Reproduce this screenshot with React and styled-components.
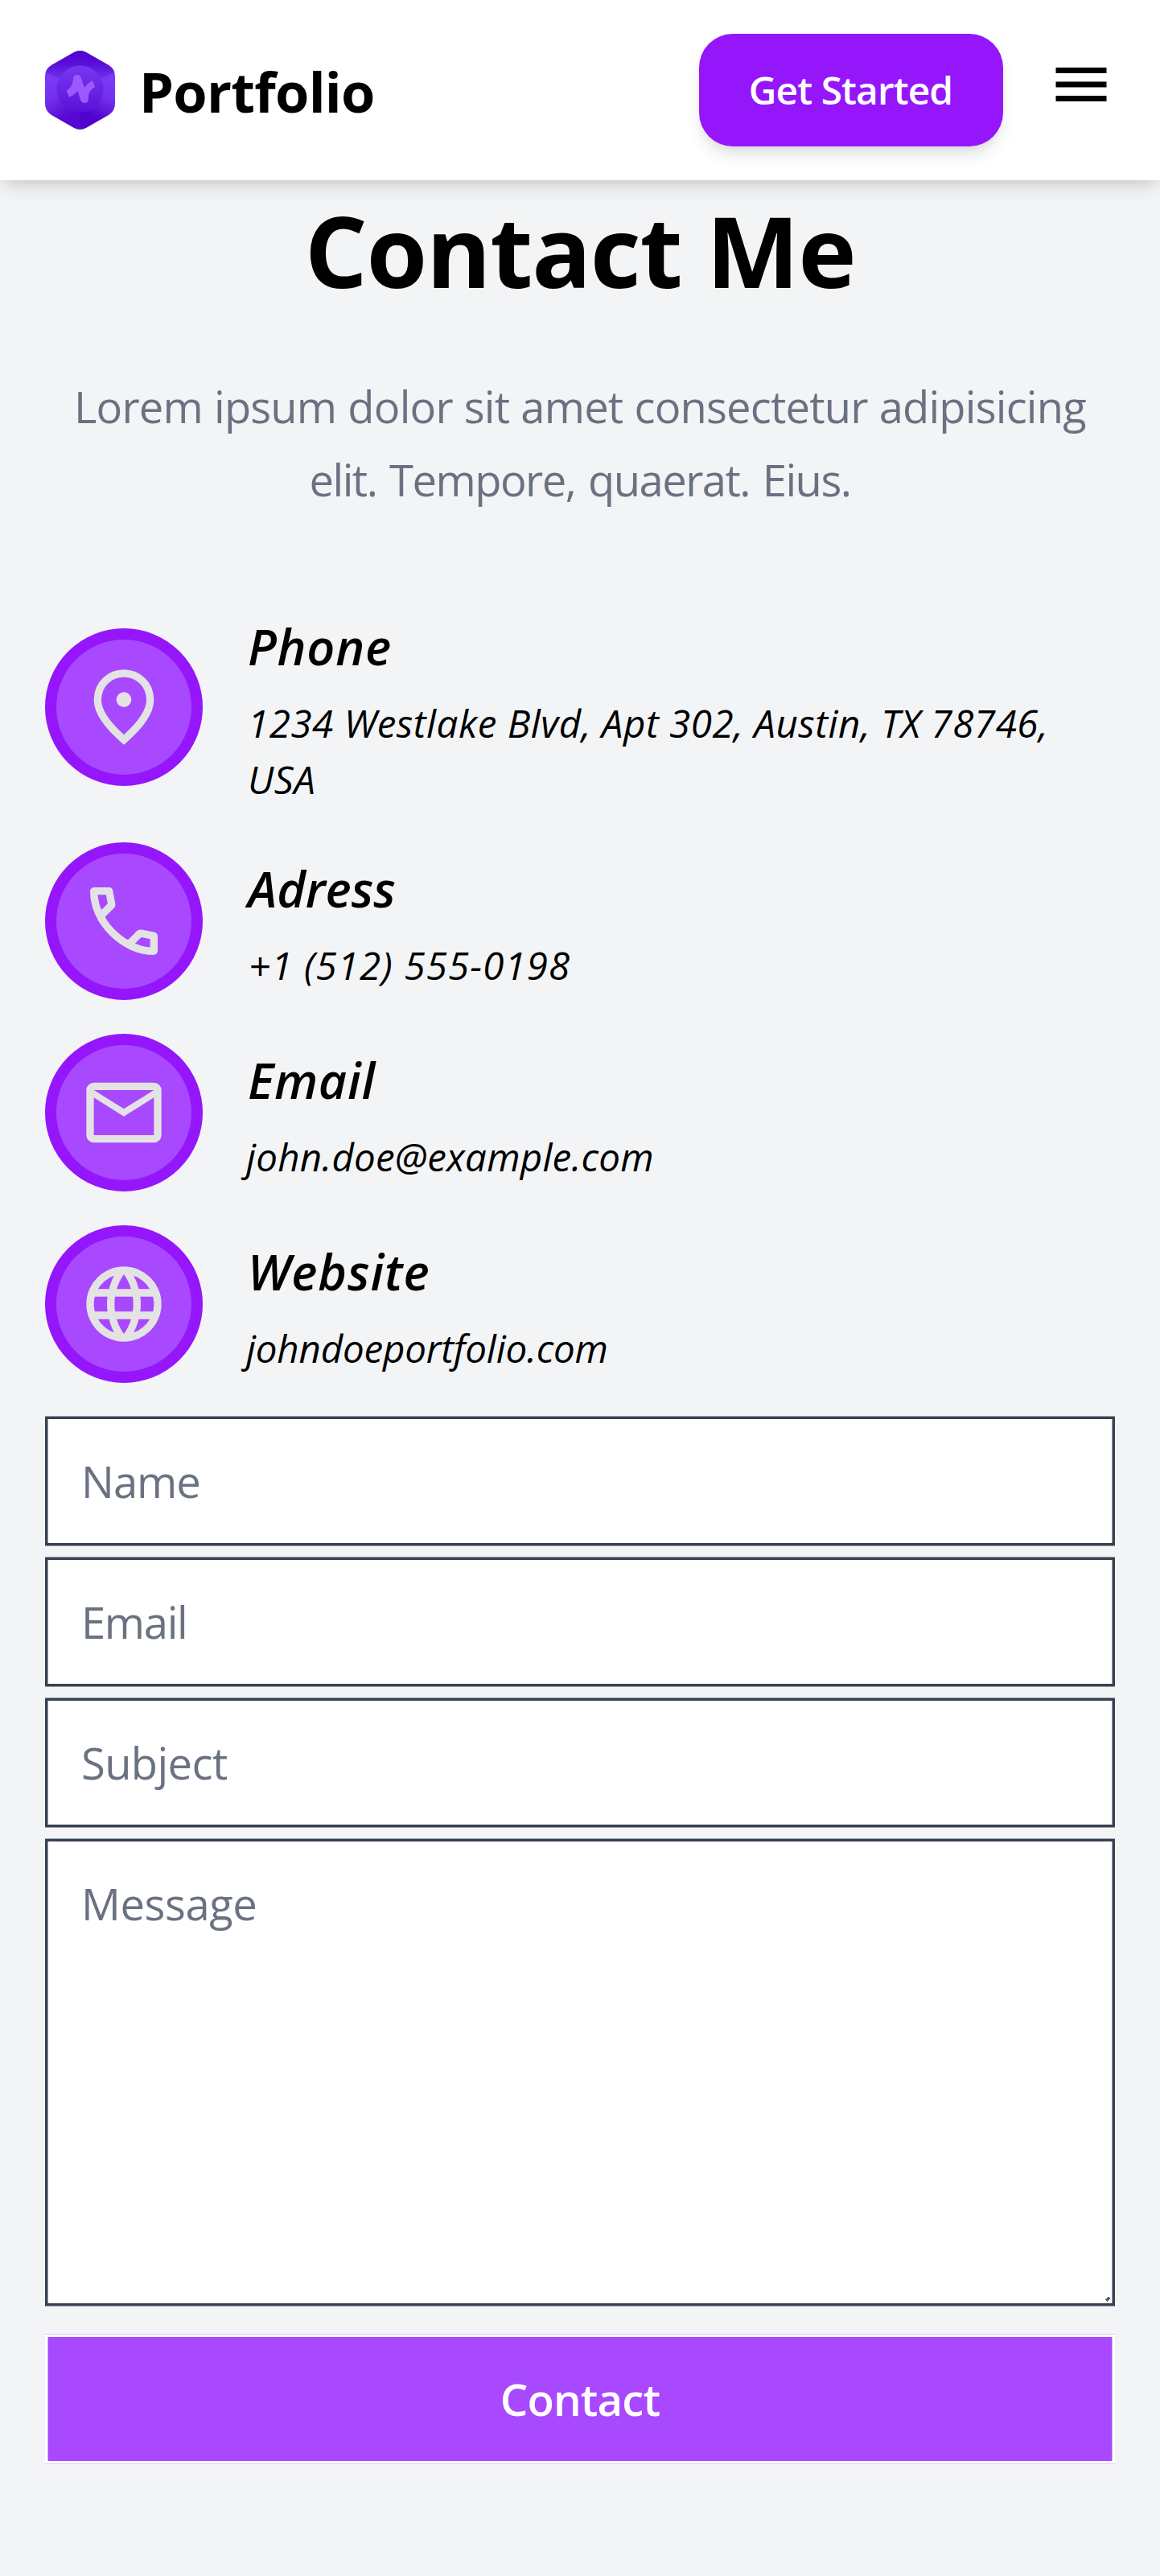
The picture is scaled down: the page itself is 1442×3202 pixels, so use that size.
import React from "react";
import styled, { createGlobalStyle } from "styled-components";

const GlobalStyle = createGlobalStyle`
  *, *::before, *::after { box-sizing: border-box; }
  html, body { margin: 0; background: #f3f4f6; }
  body { font-family: "Open Sans", "Noto Sans", sans-serif; color: #000; }
  h1, h2, p { margin: 0; }
  button, input, textarea { font-family: inherit; margin: 0; }
`;

const softShadow = "0 14px 21px -3.5px rgba(0,0,0,0.1), 0 7px 14px -7px rgba(0,0,0,0.1)";

const Page = styled.div`
  min-height: 3202px;
  background: #f3f4f6;
`;

const Header = styled.header`
  position: relative;
  z-index: 1;
  display: flex;
  align-items: center;
  justify-content: space-between;
  height: 224px;
  padding: 0 56px;
  background: #fff;
  box-shadow: ${softShadow};
`;

const Brand = styled.div`
  display: flex;
  align-items: center;
  gap: 30px;
`;

const BrandName = styled.span`
  padding-top: 4px;
  font-size: 68.5px;
  font-weight: 700;
  line-height: 98px;
  letter-spacing: -0.75px;
`;

const Actions = styled.div`
  display: flex;
  align-items: center;
  gap: 55.5px;
`;

const StartButton = styled.button`
  width: 378px;
  height: 140px;
  padding: 0 0 2px;
  border: 0;
  border-radius: 42px;
  background: #9516fb;
  color: #fff;
  font-size: 47.8px;
  font-weight: 600;
  letter-spacing: -0.9px;
  box-shadow: ${softShadow};
`;

const MenuButton = styled.button`
  display: flex;
  margin-bottom: 14px;
  padding: 0;
  border: 0;
  background: none;
  color: #000;
`;

const Main = styled.main`
  display: flex;
  flex-direction: column;
  padding: 17px 56px 0;
`;

const Title = styled.h1`
  text-align: center;
  font-size: 122.5px;
  font-weight: 700;
  line-height: 140px;
  letter-spacing: -1.3px;
`;

const Intro = styled.p`
  padding-top: 79px;
  text-align: center;
  color: #6a7282;
  font-size: 54.3px;
  line-height: 91px;
`;

const IntroLine = styled.span`
  display: block;
  letter-spacing: ${(p) => p.$track}px;
  word-spacing: ${(p) => p.$word || 0}px;
`;

const InfoList = styled.div`
  display: flex;
  flex-direction: column;
  gap: 42px;
  padding-top: 110.5px;
`;

const InfoItem = styled.div`
  display: flex;
  align-items: center;
  gap: 56px;
`;

const Badge = styled.div`
  display: flex;
  flex: none;
  align-items: center;
  justify-content: center;
  width: 196px;
  height: 196px;
  border: 14px solid #9516fb;
  border-radius: 50%;
  background: #a848ff;
  color: #e3e3e3;
`;

const InfoText = styled.div`
  display: flex;
  flex-direction: column;
  gap: 11px;
  padding: 2px 0 1px;
  font-style: italic;
`;

const InfoTitle = styled.h2`
  font-size: 61px;
  font-weight: 600;
  line-height: 98px;
  letter-spacing: ${(p) => p.$track}px;
`;

const InfoValue = styled.p`
  margin-left: ${(p) => p.$shift || 0}px;
  font-size: 47.5px;
  line-height: 70px;
  letter-spacing: ${(p) => p.$track}px;
`;

const Form = styled.form`
  display: flex;
  flex-direction: column;
  gap: 15px;
  padding-top: 42.5px;
`;

const edge = (inner, outer) =>
  `inset 1px 0 ${inner}, inset -1px 0 ${inner}, 0 -1px ${outer}, 0 1px ${outer}`;

const Input = styled.input`
  display: block;
  width: 100%;
  height: 160px;
  padding: 0 42px;
  border: 3px solid #364153;
  border-radius: 0;
  outline: none;
  background: #fff;
  font-size: 54.3px;
  letter-spacing: ${(p) => p.$track}px;
  box-shadow: ${edge("#9aa0a9", "#959ba4")};
  &::placeholder { color: #6a7282; opacity: 1; }
`;

const MessageField = styled.div`
  position: relative;
  display: flex;
`;

const Message = styled(Input).attrs({ as: "textarea" })`
  height: 580px;
  padding: 35px 42px;
  line-height: 84px;
  resize: none;
`;

const Grip = styled.svg`
  position: absolute;
  right: 6px;
  bottom: 5px;
`;

const Submit = styled.button`
  height: 160px;
  margin-top: 21px;
  padding: 0;
  border: 3px solid #fff;
  background: #a848ff;
  color: #fff;
  font-size: 54.6px;
  font-weight: 600;
  letter-spacing: -0.9px;
  box-shadow: ${edge("#d4a4ff", "#e1ceff")};
`;

const Logo = () => (
  <svg width="87" height="98" viewBox="0 0 87 98">
    <defs>
      <clipPath id="hex">
        <path d="M36 2Q43.5-2 51 2L79 18Q87 23 87 32V66Q87 75 79 80L51 96Q43.5 100 36 96L8 80Q0 75 0 66V32Q0 23 8 18Z" />
      </clipPath>
      <linearGradient id="top" x1="0" y1="0" x2="0" y2="1">
        <stop offset="0" stopColor="#4c00cc" />
        <stop offset="0.35" stopColor="#5a10d8" />
        <stop offset="0.75" stopColor="#7433ec" />
      </linearGradient>
      <linearGradient id="left" gradientUnits="userSpaceOnUse" x1="8" y1="40" x2="34" y2="88">
        <stop offset="0" stopColor="#7a38f4" />
        <stop offset="0.3" stopColor="#7431ec" />
        <stop offset="0.85" stopColor="#5508d2" />
      </linearGradient>
      <linearGradient id="right" gradientUnits="userSpaceOnUse" x1="79" y1="40" x2="53" y2="88">
        <stop offset="0" stopColor="#7a38f4" />
        <stop offset="0.3" stopColor="#7431ec" />
        <stop offset="0.85" stopColor="#4f03cb" />
      </linearGradient>
      <linearGradient id="disc" x1="0" y1="0" x2="0" y2="1">
        <stop offset="0" stopColor="#7837ef" />
        <stop offset="1" stopColor="#5a12da" />
      </linearGradient>
    </defs>
    <g clipPath="url(#hex)">
      <path fill="url(#left)" d="M0 0H44V98H0Z" />
      <path fill="url(#right)" d="M43.5 0H87V98H43.5Z" />
      <path fill="url(#top)" d="M-2 25.5L43.5 48 89 25.5V0H-2Z" />
    </g>
    <circle cx="43.5" cy="47.5" r="29" fill="url(#disc)" />
    <path
      fill="#9b59ff"
      d="M26.7 49.7Q34 45 35 36V34.5Q35.3 30 39.7 30 43.5 30 44.8 34L49 46Q52 41 59 37L62 45.3Q54 50 54 57V60.5Q53.5 65 49 65 45.5 65 44 61L40.5 50Q36 55 30 58Z"
    />
  </svg>
);

const Symbol = ({ size, d }) => (
  <svg width={size} height={size} viewBox="0 -960 960 960" fill="currentColor">
    <path d={d} />
  </svg>
);

const icons = {
  menu: "M120-240v-80h720v80H120Zm0-200v-80h720v80H120Zm0-200v-80h720v80H120Z",
  pin: "M480-480q33 0 56.5-23.5T560-560q0-33-23.5-56.5T480-640q-33 0-56.5 23.5T400-560q0 33 23.5 56.5T480-480Zm0 294q122-112 181-203.5T720-552q0-109-69.5-178.5T480-800q-101 0-170.5 69.5T240-552q0 71 59 162.5T480-186Zm0 106Q319-217 239.5-334.5T160-552q0-150 96.5-239T480-880q127 0 223.5 89T800-552q0 100-79.5 217.5T480-80Zm0-480Z",
  call: "M798-120q-125 0-247-54.5T329-329Q229-429 174.5-551T120-798q0-18 12-30t30-12h162q14 0 25 9.5t13 22.5l26 140q2 16-1 27t-11 19l-97 98q20 37 47.5 71.5T387-386q31 31 65 57.5t72 48.5l94-94q9-9 23.5-13.5T670-390l138 28q14 4 23 14.5t9 23.5v162q0 18-12 30t-30 12ZM241-600l66-66-17-94h-89q5 41 14 81t26 79Zm358 358q39 17 79.5 27t81.5 13v-88l-94-19-67 67ZM241-600Zm358 358Z",
  mail: "M160-160q-33 0-56.5-23.5T80-240v-480q0-33 23.5-56.5T160-800h640q33 0 56.5 23.5T880-720v480q0 33-23.5 56.5T800-160H160Zm320-280L160-640v400h640v-400L480-440Zm0-80 320-200H160l320 200ZM160-640v-80 480-400Z",
  globe: "M480-80q-82 0-155-31.5t-127.5-86Q143-252 111.5-325T80-480q0-83 31.5-155.5t86-127Q252-817 325-848.5T480-880q83 0 155.5 31.5t127 86q54.5 54.5 86 127T880-480q0 82-31.5 155t-86 127.5q-54.5 54.5-127 86T480-80Zm0-82q26-36 45-75t31-83H404q12 44 31 83t45 75Zm-104-16q-18-33-31.5-68.5T322-320H204q29 50 72.5 87t99.5 55Zm208 0q56-18 99.5-55t72.5-87H638q-9 38-22.5 73.5T584-178ZM170-400h136q-3-20-4.5-39.5T300-480q0-21 1.5-40.5T306-560H170q-5 20-7.5 39.5T160-480q0 21 2.5 40.5T170-400Zm216 0h188q3-20 4.5-39.5T580-480q0-21-1.5-40.5T574-560H386q-3 20-4.5 39.5T380-480q0 21 1.5 40.5T386-400Zm268 0h136q5-20 7.5-39.5T800-480q0-21-2.5-40.5T790-560H654q3 20 4.5 39.5T660-480q0 21-1.5 40.5T654-400Zm-16-240h118q-29-50-72.5-87T584-782q18 33 31.5 68.5T638-640Zm-234 0h152q-12-44-31-83t-45-75q-26 36-45 75t-31 83Zm-200 0h118q9-38 22.5-73.5T376-782q-56 18-99.5 55T204-640Z",
};

const contacts = [
  { icon: "pin", title: "Phone", titleTrack: 0.75, value: "1234 Westlake Blvd, Apt 302, Austin, TX 78746, USA", track: 0.53 },
  { icon: "call", title: "Adress", titleTrack: -0.1, value: "+1 (512) 555-0198", track: 1.1, shift: 1 },
  { icon: "mail", title: "Email", titleTrack: 0.7, value: "john.doe@example.com", track: 0.2, shift: -2 },
  { icon: "globe", title: "Website", titleTrack: 0.9, value: "johndoeportfolio.com", track: -0.2, shift: -2 },
];

export default function App() {
  return (
    <Page>
      <GlobalStyle />
      <Header>
        <Brand>
          <Logo />
          <BrandName>Portfolio</BrandName>
        </Brand>
        <Actions>
          <StartButton type="button">Get Started</StartButton>
          <MenuButton type="button" aria-label="Menu">
            <Symbol size={84} d={icons.menu} />
          </MenuButton>
        </Actions>
      </Header>
      <Main>
        <Title>Contact Me</Title>
        <Intro>
          <IntroLine $track={-0.8} $word={0.7}>Lorem ipsum dolor sit amet consectetur adipisicing</IntroLine>
          <IntroLine $track={-1.5} $word={3}>elit. Tempore, quaerat. Eius.</IntroLine>
        </Intro>
        <InfoList>
          {contacts.map((c) => (
            <InfoItem key={c.title}>
              <Badge>
                <Symbol size={112} d={icons[c.icon]} />
              </Badge>
              <InfoText>
                <InfoTitle $track={c.titleTrack}>{c.title}</InfoTitle>
                <InfoValue $track={c.track} $shift={c.shift}>{c.value}</InfoValue>
              </InfoText>
            </InfoItem>
          ))}
        </InfoList>
        <Form>
          <Input type="text" placeholder="Name" $track={-1} />
          <Input type="email" placeholder="Email" $track={-1.3} />
          <Input type="text" placeholder="Subject" $track={-0.6} />
          <MessageField>
            <Message placeholder="Message" $track={-0.4} />
            <Grip width="6" height="6" viewBox="0 0 6 6">
              <path d="M3 0H5V1H6V3H5V4H4V5H3V6H2V5H1V4H0V3H1V2H2V1H3Z" fill="#606060" />
            </Grip>
          </MessageField>
          <Submit type="button">Contact</Submit>
        </Form>
      </Main>
    </Page>
  );
}
